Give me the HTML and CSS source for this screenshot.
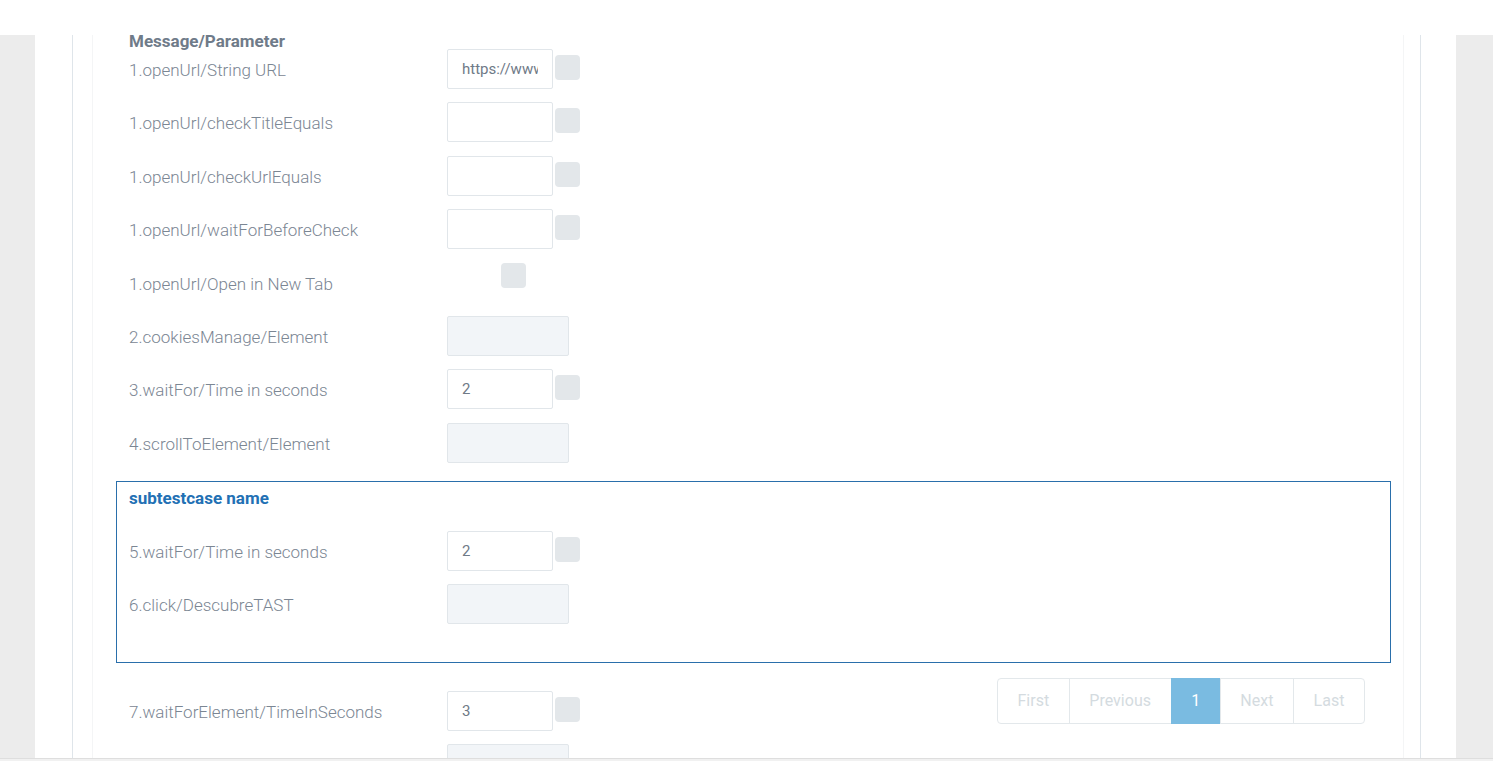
FILE: index.html
```html
<!DOCTYPE html>
<html>
<head>
<meta charset="utf-8">
<link rel="stylesheet" href="styles.css">
</head>
<body>
<div class="topbar"></div>
<div class="viewport">
  <div class="main">
    <div class="card">
      <div class="card-inner">
        <div class="content">
          <div class="section-head">Message/Parameter</div>
          <div class="rows">
            <div class="row"><div class="label">1.openUrl/String URL</div><div class="field"><input class="inp" value="https://www.google.com"><span class="btn-sq"></span></div></div>
            <div class="row"><div class="label">1.openUrl/checkTitleEquals</div><div class="field"><input class="inp" value=""><span class="btn-sq"></span></div></div>
            <div class="row"><div class="label">1.openUrl/checkUrlEquals</div><div class="field"><input class="inp" value=""><span class="btn-sq"></span></div></div>
            <div class="row"><div class="label">1.openUrl/waitForBeforeCheck</div><div class="field"><input class="inp" value=""><span class="btn-sq"></span></div></div>
            <div class="row"><div class="label">1.openUrl/Open in New Tab</div><div class="field check-field"><span class="check"></span></div></div>
            <div class="row"><div class="label">2.cookiesManage/Element</div><div class="field"><div class="inp-disabled"></div></div></div>
            <div class="row"><div class="label">3.waitFor/Time in seconds</div><div class="field"><input class="inp" value="2"><span class="btn-sq"></span></div></div>
            <div class="row"><div class="label">4.scrollToElement/Element</div><div class="field"><div class="inp-disabled"></div></div></div>
          </div>

          <div class="subcase">
            <div class="subcase-title">subtestcase name</div>
            <div class="rows">
              <div class="row"><div class="label">5.waitFor/Time in seconds</div><div class="field"><input class="inp" value="2"><span class="btn-sq"></span></div></div>
              <div class="row"><div class="label">6.click/DescubreTAST</div><div class="field"><div class="inp-disabled"></div></div></div>
            </div>
          </div>

          <div class="after">
            <div class="rows after-rows">
              <div class="row"><div class="label">7.waitForElement/TimeInSeconds</div><div class="field"><input class="inp" value="3"><span class="btn-sq"></span></div></div>
              <div class="row"><div class="label"></div><div class="field"><div class="inp-disabled"></div></div></div>
            </div>
            <ul class="pagination">
              <li class="page">First</li>
              <li class="page">Previous</li>
              <li class="page active">1</li>
              <li class="page">Next</li>
              <li class="page">Last</li>
            </ul>
          </div>
        </div>
      </div>
    </div>
  </div>
</div>
<div class="bottombar"></div>
</body>
</html>
```

FILE: styles.css
```css
* { box-sizing: border-box; }
html, body { margin: 0; padding: 0; }
body {
  background: #ececec;
  font-family: Roboto, "Liberation Sans", sans-serif;
  overflow: hidden;
}
.topbar { height: 35px; background: #fff; }
.viewport {
  height: 723px;
  clip-path: inset(-20px 0 0 0);
}
.main {
  margin-left: 35px;
  width: 1421px;
  height: 100%;
  background: #fff;
  padding: 0 35px 0 37px;
}
.card {
  height: 100%;
  border-left: 1px solid #dfe5ea;
  border-right: 1px solid #dfe5ea;
  padding: 0 16px 0 19px;
}
.card-inner {
  display: flow-root;
  height: 100%;
  border-left: 1px solid #f4f5f6;
  border-right: 1px solid #f4f5f6;
  padding: 0 12px 0 23px;
}
.content { width: 100%; }
.section-head {
  margin: -4px 0 -2px;
  padding-left: 13px;
  font-size: 17px;
  line-height: 20px;
  font-weight: 700;
  color: #6f7b89;
}
.rows {
  display: flex;
  flex-direction: column;
  gap: 13.4px;
  padding-left: 13px;
}
.row {
  display: flex;
  align-items: center;
  height: 40px;
}
.label {
  width: 318px;
  font-size: 17px;
  color: #7b8693;
  font-weight: 300;
  padding-top: 2px;
}
.field {
  display: flex;
  align-items: flex-start;
  height: 40px;
  gap: 2px;
}
.inp {
  width: 106px;
  height: 40px;
  border: 1px solid #e1e6ea;
  border-radius: 2px;
  padding: 0 14px;
  font-family: Roboto, "Liberation Sans", sans-serif;
  font-size: 15px;
  color: #6f7a87;
  background: #fff;
  outline: none;
}
.btn-sq {
  width: 25px;
  height: 25px;
  margin-top: 6px;
  border-radius: 4px;
  background: #e3e7ea;
}
.check-field {
  width: 133px;
  justify-content: center;
}
.check {
  width: 25px;
  height: 25px;
  border-radius: 4px;
  background: #e3e7ea;
}
.inp-disabled {
  width: 122px;
  height: 40px;
  border: 1px solid #e1e6ea;
  border-radius: 2px;
  background: #f2f5f8;
}
.subcase {
  margin-top: 18px;
  border: 1px solid #2a6fab;
  height: 182px;
  padding: 7px 0 0 12px;
}
.subcase .rows { padding-left: 0; }
.subcase-title {
  font-size: 17px;
  line-height: 19px;
  font-weight: 700;
  color: #2270b4;
  margin-bottom: 23px;
}
.after {
  display: flex;
  justify-content: space-between;
  align-items: flex-start;
}
.after-rows { margin-top: 28px; }
.pagination {
  display: flex;
  list-style: none;
  margin: 15px 26px 0 0;
  padding: 0;
}
.page {
  border: 1px solid #e3e8eb;
  margin-left: -1px;
  padding: 12px 19.6px;
  font-size: 16px;
  line-height: 20px;
  color: #d4dbe0;
}
.page:first-child { border-radius: 4px 0 0 4px; margin-left: 0; }
.page:last-child { border-radius: 0 4px 4px 0; }
.page.active {
  background: #7abbe1;
  border-color: #7abbe1;
  color: #fff;
}
.bottombar {
  height: 3px;
  border-top: 1px solid #dedede;
  background: #f1f1f1;
}
```
